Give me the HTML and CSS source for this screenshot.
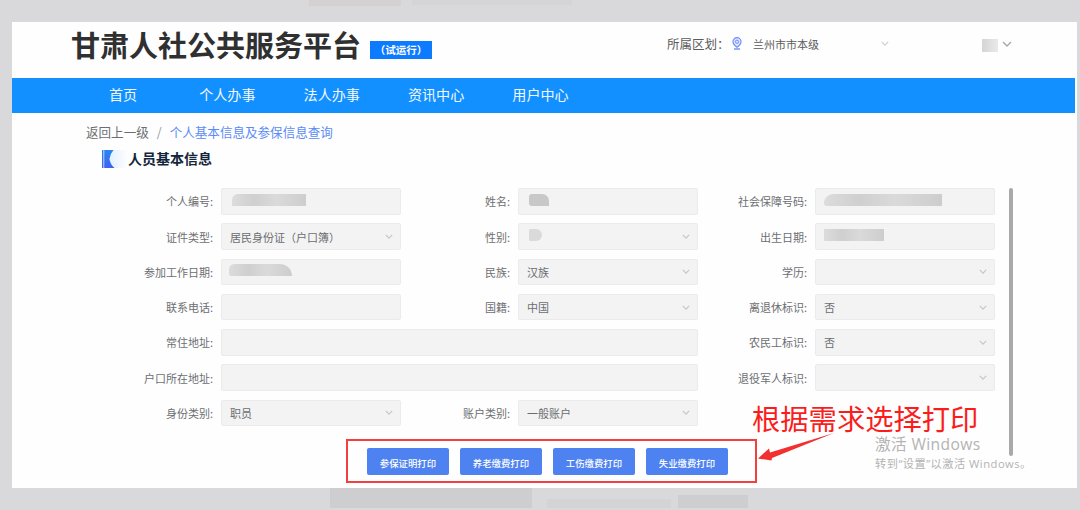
FILE: index.html
```html
<!DOCTYPE html>
<html lang="zh-CN">
<head>
    <meta charset="UTF-8">
    <meta name="viewport" content="width=device-width, initial-scale=1.0">
    <title>甘肃人社公共服务平台</title>
    <link rel="stylesheet" href="styles.css">
</head>
<body>
    <svg class="defs" width="0" height="0">
        <symbol id="down" viewBox="0 0 10 6"><path d="M1 1l4 4 4-4" fill="none" stroke="currentColor" stroke-width="1.4"/></symbol>
    </svg>
    <div class="ghost g1"></div>
    <div class="ghost g2"></div>
    <div class="ghost g3"></div>
    <div class="ghost g4"></div>
    <div class="ghost g5"></div>
    <div class="page">
        <header class="header">
            <h1 class="title">甘肃人社公共服务平台</h1>
            <span class="badge">（试运行）</span>
            <div class="area">
                <span class="area-label">所属区划<span class="colon">：</span></span>
                <svg class="pin" viewBox="0 0 10 13"><path d="M5 10.200C2.600 8.400 1 6.800 1 4.700a4 4 0 0 1 8 0c0 2.100-1.600 3.700-4 5.500z" fill="#dfe6ff" stroke="#6f8dff" stroke-width="1.200"/><circle cx="5" cy="4.700" r="1.600" fill="none" stroke="#6f8dff"/><path d="M2 12h6" stroke="#6f8dff" stroke-width="1.400"/></svg>
                <span class="area-name">兰州市市本级</span>
                <svg class="down"><use href="#down"/></svg>
            </div>
            <div class="user">
                <span class="mask m-user"></span>
                <svg class="down"><use href="#down"/></svg>
            </div>
        </header>
        <nav class="nav">
            <a class="home">首页</a>
            <a>个人办事</a>
            <a>法人办事</a>
            <a>资讯中心</a>
            <a>用户中心</a>
        </nav>
        <div class="crumb"><span>返回上一级</span><i>/</i><b>个人基本信息及参保信息查询</b></div>
        <div class="section">
            <svg class="mark" viewBox="0 0 26 18">
                <defs>
                    <linearGradient id="fade"><stop offset="0" stop-color="#e2f1ff"/><stop offset="1" stop-color="#fefefe"/></linearGradient>
                    <linearGradient id="blue" x2="0" y2="1"><stop offset="0" stop-color="#2a86f0"/><stop offset="1" stop-color="#3f62f0"/></linearGradient>
                </defs>
                <path d="M8 0h18v18H8z" fill="url(#fade)"/>
                <path d="M0 0h1.500v18H0zM2.200 0H11.500Q8 4 7.500 9 8 14 12.500 18H2.200z" fill="url(#blue)"/>
            </svg>
            <h2>人员基本信息</h2>
        </div>
        <div class="content">
            <div class="form">
                <div class="item"><label>个人编号:</label><div class="field"><span class="mask m1"></span></div></div>
                <div class="item"><label>姓名:</label><div class="field"><span class="mask m2"></span></div></div>
                <div class="item"><label>社会保障号码:</label><div class="field"><span class="mask m3"></span></div></div>

                <div class="item"><label>证件类型:</label><div class="field">居民身份证（户口簿）<svg class="down"><use href="#down"/></svg></div></div>
                <div class="item"><label>性别:</label><div class="field"><span class="mask m4"></span><svg class="down"><use href="#down"/></svg></div></div>
                <div class="item"><label>出生日期:</label><div class="field"><span class="mask m5"></span></div></div>

                <div class="item"><label>参加工作日期:</label><div class="field"><span class="mask m6"></span></div></div>
                <div class="item"><label>民族:</label><div class="field">汉族<svg class="down"><use href="#down"/></svg></div></div>
                <div class="item"><label>学历:</label><div class="field"><svg class="down"><use href="#down"/></svg></div></div>

                <div class="item"><label>联系电话:</label><div class="field"></div></div>
                <div class="item"><label>国籍:</label><div class="field">中国<svg class="down"><use href="#down"/></svg></div></div>
                <div class="item"><label>离退休标识:</label><div class="field">否<svg class="down"><use href="#down"/></svg></div></div>

                <div class="item wide"><label>常住地址:</label><div class="field"></div></div>
                <div class="item"><label>农民工标识:</label><div class="field">否<svg class="down"><use href="#down"/></svg></div></div>

                <div class="item wide"><label>户口所在地址:</label><div class="field"></div></div>
                <div class="item"><label>退役军人标识:</label><div class="field"><svg class="down"><use href="#down"/></svg></div></div>

                <div class="item"><label>身份类别:</label><div class="field">职员<svg class="down"><use href="#down"/></svg></div></div>
                <div class="item"><label>账户类别:</label><div class="field">一般账户<svg class="down"><use href="#down"/></svg></div></div>
            </div>
            <div class="scroll"></div>
        </div>
        <div class="btns">
            <button>参保证明打印</button>
            <button>养老缴费打印</button>
            <button>工伤缴费打印</button>
            <button>失业缴费打印</button>
        </div>
    </div>
    <div class="watermark">
        <p class="w1">激活 Windows</p>
        <p class="w2">转到“设置”以激活 Windows。</p>
    </div>
    <svg class="arrow" viewBox="0 0 80 30"><path d="M0 25.500L11 15.500 12 19.500 76 0 14 25 13.500 27.500z" fill="#f23030"/></svg>
    <div class="note">根据需求选择打印</div>
</body>
</html>
```
FILE: styles.css
```css
*{
    margin: 0px;
    padding: 0px;
    box-sizing: border-box;
}
body{
    width: 1080px; height: 510px;
    overflow: hidden;
    position: relative;
    padding: 22px 3px 22px 12px;
    background: #d9d9db;
    font-family: "Noto Sans CJK SC", sans-serif;
    color: #6c6e72;
}
.defs{
    position: absolute;
}
.page{
    height: 466px;
    position: relative;
    background: #fefefe;
}
.header{
    height: 56px;
    display: flex;
    padding-left: 59px;
}
.title{
    width: 290px;
    font-size: 29px; line-height: 44px;
    color: #303030;
    white-space: nowrap;
}
.badge{
    width: 62px; height: 18px;
    margin: 19px 0 0 9px;
    background: #0d7bff;
    color: #fff;
    font-size: 10.5px; line-height: 17px; font-weight: bold;
    display: flex; justify-content: center;
    white-space: nowrap;
}
.area{
    width: 222px; height: 43px;
    margin-left: 235px;
    display: flex; align-items: center;
    color: #5a5a5a;
}
.area-label{
    width: 64px;
    font-size: 12.5px;
    white-space: nowrap;
}
.colon{
    font-family: "Noto Sans CJK TC", sans-serif;
}
.pin{
    width: 10px; height: 13px;
    margin-left: 1px;
}
.area-name{
    margin-left: 11px;
    font-size: 11px;
}
.down{
    width: 8px; height: 5px;
    margin-left: auto;
    color: #c3c5c9;
}
.area .down{
    color: #d0d0d0;
}
.user{
    width: 30px; height: 44px;
    margin-left: 93px;
    display: flex; align-items: center;
}
.user .down{
    width: 10px; height: 6px;
    color: #a8a8a8;
}
.nav{
    width: 1063px; height: 35px;
    padding-left: 97px;
    display: flex; gap: 48px;
    background: #1290ff;
    color: #f2f9ff;
    font-size: 14.1px; line-height: 33px;
}
.home{
    margin-right: 14px;
}
.crumb{
    height: 36px;
    padding-left: 74px;
    display: flex;
    font-size: 12.55px; line-height: 37px;
}
.crumb i{
    width: 21px;
    text-align: center;
    font-style: normal;
    color: #999;
}
.crumb b{
    font-weight: normal;
    color: #5b8cf5;
}
.section{
    height: 20px;
    padding-left: 90px;
    display: flex; align-items: center;
}
.mark{
    width: 26px; height: 18px;
}
.section h2{
    font-size: 14px; line-height: 18px;
    padding-bottom: 2px;
    color: #14263c;
}
.content{
    height: 268px;
    margin-top: 19px;
    padding-left: 92px;
    display: flex;
}
.form{
    display: grid;
    grid-template-columns: repeat(3, 297px);
    grid-auto-rows: 26.5px;
    align-content: start;
    row-gap: 8.75px;
}
.item{
    display: flex; align-items: center;
    font-size: 11px;
}
.item label{
    width: 117px;
    padding-right: 8px;
    text-align: right;
}
.wide{
    grid-column: span 2;
}
.field{
    flex: 1;
    height: 100%;
    padding: 0 7px 0 8px;
    display: flex; align-items: center;
    background: #f3f3f3;
    border: 1px solid #ebebeb;
    border-radius: 2px;
}
.scroll{
    width: 4px;
    margin-left: 14px;
    border-radius: 2px;
    background: #a9a9a9;
}
/* hidden personal data */
.mask{
    height: 12px;
    margin-bottom: 3px;
    background: linear-gradient(90deg, #dcdcdc, #cfcfcf 30%, #dadada 60%, #cdcdcd);
    filter: blur(0.6px);
}
.m-user{
    width: 16px; height: 13px;
    margin: 3px 0 0 0;
    background: linear-gradient(90deg, #d5d5d5, #e9e9e9);
}
.m1{
    width: 74px;
    margin-left: 2px;
    border-radius: 6px 0 0 0;
}
.m2{
    width: 20px;
    margin-left: 2px;
    border-radius: 3px 7px 0 3px;
    background: #c8c8c8;
}
.m3{
    width: 118px;
    border-radius: 10px 0 0 3px;
}
.m4{
    width: 13px;
    margin-left: 2px;
    border-radius: 2px 8px 8px 2px;
    background: #dadada;
}
.m5{
    width: 60px;
}
.m6{
    width: 63px;
    margin-left: -1px;
    border-radius: 6px 14px 0 3px;
}
.btns{
    width: 411px; height: 44px;
    margin: -17px 0 0 334px;
    padding: 1px 0 0 19px;
    display: flex; align-items: center; gap: 11px;
    border: 2px solid #f24040;
}
.btns button{
    width: 82px; height: 27px;
    padding-top: 2px;
    border: none;
    border-radius: 2px;
    background: #4d82f0;
    color: #fff;
    font: 500 9.4px "Noto Sans CJK SC", sans-serif;
}
.watermark{
    position: absolute; left: 875px; top: 433px;
    font-family: "Open Sans", "Noto Sans CJK SC", sans-serif;
    color: #b3b3b3;
    white-space: nowrap;
}
.w1{
    font-size: 15.6px; line-height: 22px;
    letter-spacing: 0.4px;
}
.w2{
    font-size: 11.2px; line-height: 17px;
    letter-spacing: 0.5px;
}
.note{
    position: absolute; left: 752px; top: 403px;
    font-size: 28.3px; line-height: 29px;
    color: #fb1c1c;
    white-space: nowrap;
}
.arrow{
    position: absolute; left: 758px; top: 433px;
    width: 80px; height: 30px;
}
/* dimmed page behind the panel */
.ghost{
    position: absolute;
    background: #cecdd0;
}
.g1{
    left: 330px; top: 488px;
    width: 202px; height: 20px;
}
.g2{
    left: 678px; top: 495px;
    width: 70px; height: 13px;
}
.g3{
    left: 309px; top: 0px;
    width: 92px; height: 6px;
    background: #d5d0d2;
}
.g4{
    left: 412px; top: 0px;
    width: 160px; height: 5px;
    background: #d5d5d7;
}
.g5{
    left: 547px; top: 499px;
    width: 124px; height: 9px;
    background: #d4d4d6;
}
```
